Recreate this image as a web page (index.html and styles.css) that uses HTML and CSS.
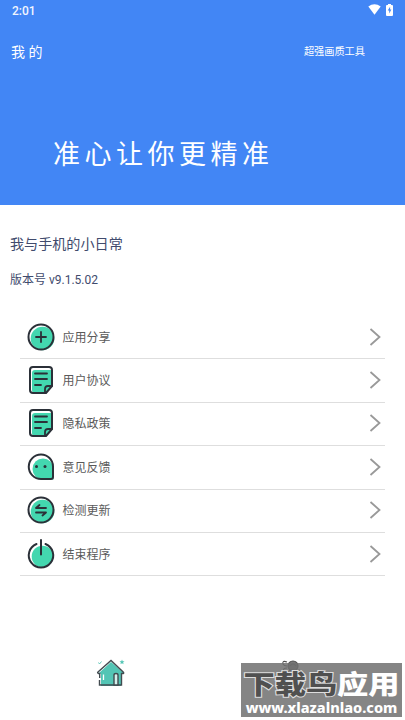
FILE: index.html
```html
<!DOCTYPE html>
<html lang="zh-CN">
<head>
    <meta charset="UTF-8">
    <meta name="viewport" content="width=device-width, initial-scale=1.0">
    <title>我的</title>
    <link rel="stylesheet" href="styles.css">
</head>
<body>
    <!-- Shared icons -->
    <svg class="sprite" aria-hidden="true">
        <symbol id="doc" viewBox="0 0 30 30">
            <path class="mint" d="M9 5h17v16l-6 7H9q-3 0-3-3V8q0-3 3-3z"/>
            <path class="line" d="M7 2h16q3 0 3 3v16l-6 7H7q-3 0-3-3V5q0-3 3-3z"/>
            <path class="line thin" d="M9 8.500h12M9 14h12M9 20h6M19 28v-4q0-3 3-3h4"/>
        </symbol>
        <symbol id="arrow" viewBox="0 0 12 18">
            <path d="M1.500 1l9 8-9 8"/>
        </symbol>
    </svg>

    <header class="header">
        <div class="status-bar">
            <span>2:01</span>
            <div class="status-icons">
                <svg width="13" height="11" viewBox="0 0 13 11"><path fill="#fff" d="M.3 2.600Q6.500-2.100 12.700 2.600L6.500 10.700z"/></svg>
                <svg width="7" height="12" viewBox="0 0 7 12"><path fill="#fff" d="M2 0h3v1h1q1 0 1 1v9q0 1-1 1H1q-1 0-1-1V2q0-1 1-1h1z"/><path fill="#4286f5" d="M4.100 2.800L1.700 6.600h1.500v3l2.200-4H4.100z"/></svg>
            </div>
        </div>
        <div class="title-bar">
            <h1>我 的</h1>
            <span class="app-name">超强画质工具</span>
        </div>
        <p class="slogan">准心让你更精准</p>
    </header>

    <section class="info">
        <h2>我与手机的小日常</h2>
        <p>版本号 v9.1.5.02</p>
    </section>

    <ul class="menu">
        <li>
            <svg class="icon" viewBox="0 0 30 30">
                <circle class="mint" cx="16.500" cy="16.500" r="11.800"/>
                <circle class="line" cx="15" cy="15" r="12.500"/>
                <path class="line thin" d="M15 10v10M10 15h10"/>
            </svg>
            <span>应用分享</span>
            <svg class="arrow"><use href="#arrow"/></svg>
        </li>
        <li>
            <svg class="icon"><use href="#doc"/></svg>
            <span>用户协议</span>
            <svg class="arrow"><use href="#arrow"/></svg>
        </li>
        <li>
            <svg class="icon"><use href="#doc"/></svg>
            <span>隐私政策</span>
            <svg class="arrow"><use href="#arrow"/></svg>
        </li>
        <li>
            <svg class="icon" viewBox="0 0 30 30">
                <path class="mint" d="M17 6.500a10.500 10.500 0 0 1 10.500 10.500v10.500H17a10.500 10.500 0 0 1 0-21z"/>
                <path class="line" d="M15 2.500a12 12 0 0 1 12 12V25q0 2-2 2H15a12.200 12.200 0 0 1 0-24.500z"/>
                <circle class="dot" cx="10.500" cy="14.500" r="1.500"/>
                <circle class="dot" cx="19" cy="14.500" r="1.500"/>
            </svg>
            <span>意见反馈</span>
            <svg class="arrow"><use href="#arrow"/></svg>
        </li>
        <li>
            <svg class="icon" viewBox="0 0 30 30">
                <circle class="mint" cx="16.500" cy="16.500" r="11.800"/>
                <circle class="line" cx="15" cy="15" r="12.500"/>
                <path class="line thin" d="M20 13H10l3.500-3M10 17.500h10l-3.500 3"/>
            </svg>
            <span>检测更新</span>
            <svg class="arrow"><use href="#arrow"/></svg>
        </li>
        <li>
            <svg class="icon" viewBox="0 0 30 30">
                <circle class="mint" cx="16.500" cy="17.500" r="10.800"/>
                <path class="line" d="M10.500 5A12.200 12.200 0 1 0 19.500 5M15 1v14.500"/>
            </svg>
            <span>结束程序</span>
            <svg class="arrow"><use href="#arrow"/></svg>
        </li>
    </ul>

    <nav class="tab-bar">
        <svg class="home" viewBox="0 0 30 30">
            <path fill="#53c5b5" d="M3 15L15 4l13 11-3 1v12H5V16z"/>
            <path class="outline" d="M3.500 22v5h22V15.500h1.700q1-.5 0-1.500L15 2.500 2 14q-1 1 .5 1.500h1.200V20"/>
            <path class="outline door" d="M18 27V17q0-1.500 2-1.500t2 1.500v10z"/>
            <path class="shine" d="M7.500 16.500v5.500"/>
            <path class="spark" d="M2.500 4.500l1 1.500 2-2.500"/>
            <path class="star" d="M26 1.500l.7 1.700 1.800.1-1.400 1.200.5 1.800-1.600-1-1.600 1 .5-1.800-1.400-1.200 1.800-.1z"/>
        </svg>
        <svg class="mine" viewBox="0 0 24 14">
            <circle cx="13" cy="6" r="5"/>
            <path d="M7 2Q2 0 3 4q1 2 4 2M4 12q-2-4 3-4M8 12q2-3 5-2t7 0M10 6q3-4 6 0"/>
        </svg>
    </nav>

    <div class="watermark">
        <p class="mark-name"><span>下载鸟</span>应用</p>
        <p class="mark-url">www.xlazalnlao.com</p>
    </div>
</body>
</html>
```
FILE: styles.css
```css
* {
    margin: 0;
    padding: 0;
    box-sizing: border-box;
}

body {
    height: 720px;
    overflow: hidden;
    position: relative;
    display: flex;
    flex-direction: column;
    background-color: #fff;
    font-family: Roboto, 'Noto Sans CJK SC', sans-serif;
}

.sprite {
    display: none;
}

/* Header */
.header {
    height: 205px;
    flex-shrink: 0;
    background-color: #4286f5;
    color: #fff;
}

.status-bar {
    height: 21px;
    padding: 0 12px;
    display: flex;
    justify-content: space-between;
    align-items: center;
    font-size: 12px;
    font-weight: 500;
    color: #f0f5ff;
}

.status-icons {
    display: flex;
    align-items: center;
    gap: 5px;
    padding-bottom: 2px;
}

.title-bar {
    height: 59px;
    padding: 0 40px 0 11px;
    display: flex;
    justify-content: space-between;
    align-items: center;
}

.title-bar h1 {
    font-size: 14px;
    font-weight: 400;
}

.app-name {
    font-size: 10.2px;
}

.slogan {
    margin-top: 55px;
    padding-left: 53px;
    font-size: 27px;
    line-height: 40px;
    letter-spacing: 4.5px;
    white-space: nowrap;
}

/* Version info */
.info {
    height: 111px;
    flex-shrink: 0;
    padding: 27px 10px 0;
    color: #414b6d;
}

.info h2 {
    font-size: 14.1px;
    font-weight: 400;
    line-height: 24px;
}

.info p {
    margin-top: 14px;
    font-size: 12px;
    line-height: 20px;
}

/* Menu list */
.menu {
    padding: 0 20px;
    list-style: none;
}

.menu li {
    height: 43.4px;
    padding: 0 4px 1px 6px;
    display: flex;
    align-items: center;
    border-bottom: 1px solid #dedede;
    color: #5a5a5a;
    font-size: 12px;
}

.menu span {
    padding-bottom: 1px;
}

.icon {
    width: 30px;
    height: 30px;
    margin-right: 6.5px;
}

.mint {
    fill: #43d7af;
}

.line {
    fill: none;
    stroke: #2b3038;
    stroke-width: 2;
    stroke-linecap: round;
    stroke-linejoin: round;
}

.thin {
    stroke-width: 1.8;
}

.dot {
    fill: #2b3038;
}

.arrow {
    width: 12px;
    height: 18px;
    margin-left: auto;
    fill: none;
    stroke: #999;
    stroke-width: 1.8;
}

/* Bottom tabs */
.tab-bar {
    height: 62px;
    margin-top: auto;
    display: grid;
    grid-template-columns: 96px 184px 1fr;
}

.home {
    grid-column: 2;
    width: 30px;
    height: 30px;
}

.outline {
    fill: none;
    stroke: #424b50;
    stroke-width: 1.4;
}

.door {
    fill: #d5f0ec;
}

.shine {
    stroke: #fff;
    stroke-width: 1.3;
}

.spark {
    fill: none;
    stroke: #53c5b5;
    stroke-width: 0.9;
}

.star {
    fill: #53c5b5;
}

.mine {
    grid-column: 3;
    width: 24px;
    height: 14px;
    margin-top: 2px;
    fill: #777;
    stroke: #505050;
    stroke-width: 1.1;
}

.mine path {
    fill: none;
}

/* Watermark lies over the tabs */
.watermark {
    position: absolute;
    left: 241px;
    top: 663px;
    width: 161px;
    height: 54px;
    padding-top: 8px;
    background-color: rgba(112, 112, 112, 0.85);
    color: #fff;
    text-align: center;
    white-space: nowrap;
}

.mark-name {
    height: 29px;
    font-size: 26px;
    font-weight: 900;
    line-height: 29px;
    transform: scaleX(1.2);
}

.mark-name span {
    color: #505050;
    -webkit-text-stroke: 2px #ddd;
    paint-order: stroke fill;
}

.mark-url {
    font-family: 'Noto Sans', sans-serif;
    font-size: 14.5px;
    font-weight: 800;
    line-height: 15px;
}
```
